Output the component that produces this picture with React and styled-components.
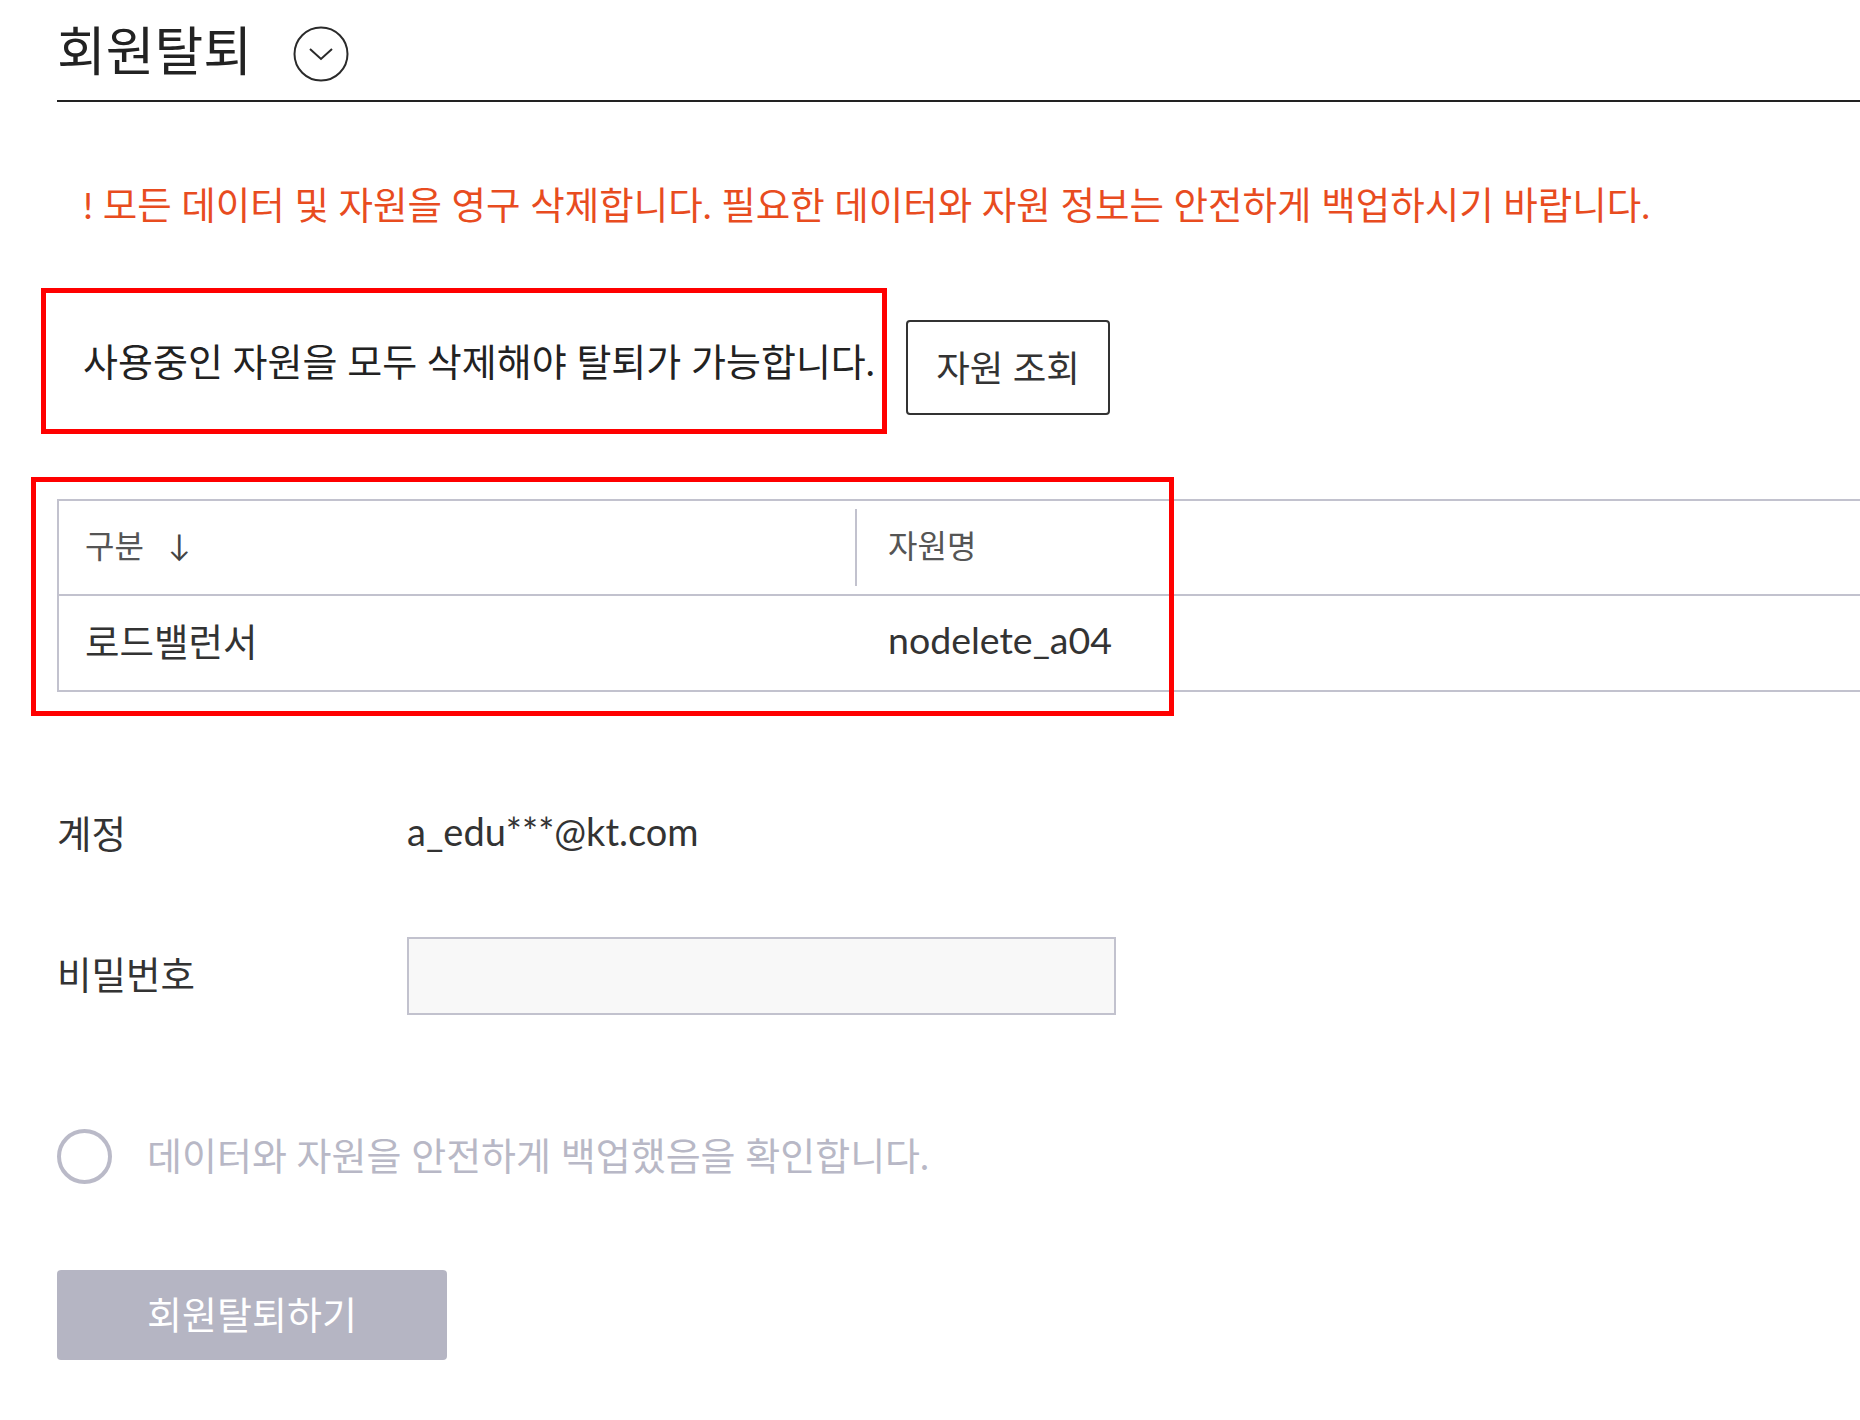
import React from 'react';
import styled, { createGlobalStyle } from 'styled-components';

const GlobalStyle = createGlobalStyle`
  body {
    margin: 0;
    background: #ffffff;
    font-family: 'Lato', 'Noto Sans CJK KR', sans-serif;
    color: #333333;
  }
`;

const Page = styled.div`
  width: 1860px;
  min-height: 1420px;
  padding-left: 57px;
  box-sizing: border-box;
  overflow: hidden;
`;

const Header = styled.div`
  display: flex;
  align-items: center;
  height: 100px;
  border-bottom: 2px solid #222222;
`;

const Title = styled.h1`
  margin: 0;
  font-size: 53px;
  font-weight: 400;
  color: #222222;
  line-height: 1;
`;

const ToggleIcon = styled.button`
  display: flex;
  margin: 8px 0 0 41px;
  padding: 0;
  border: none;
  background: none;
  cursor: pointer;
`;

const Warning = styled.p`
  margin: 78px 0 0 26px;
  font-size: 37.5px;
  line-height: 50px;
  color: #e84c1f;
`;

const NoticeRow = styled.div`
  display: flex;
  align-items: flex-start;
  margin-top: 58px;
`;

const NoticeBox = styled.div`
  display: flex;
  align-items: center;
  width: 846px;
  height: 146px;
  margin-left: -16px;
  padding: 0 0 4px 37px;
  box-sizing: border-box;
  border: 5px solid #ff0000;
  font-size: 38px;
  color: #222222;
`;

const OutlineButton = styled.button`
  width: 204px;
  height: 95px;
  margin: 32px 0 0 19px;
  padding-bottom: 4px;
  border: 2px solid #333333;
  border-radius: 4px;
  background: #ffffff;
  font-family: inherit;
  font-size: 36.5px;
  color: #333333;
`;

const TableSection = styled.div`
  position: relative;
  margin-top: 65px;
`;

const Highlight = styled.div`
  position: absolute;
  left: -26px;
  top: -22px;
  width: 1143px;
  height: 239px;
  box-sizing: border-box;
  border: 5px solid #ff0000;
  pointer-events: none;
`;

const Table = styled.div`
  width: calc(100% + 40px);
  border: 2px solid #c2c2ce;
  box-sizing: border-box;
`;

const Row = styled.div`
  display: grid;
  grid-template-columns: 798px 1fr;
  height: ${p => (p.head ? '93px' : '94px')};
  border-bottom: ${p => (p.head ? '2px solid #c2c2ce' : 'none')};
`;

const Cell = styled.div`
  position: relative;
  display: flex;
  align-items: center;
  padding-left: ${p => (p.first ? '26px' : '31px')};
  padding-bottom: 8px;
  font-size: ${p => (p.head ? '32px' : '37.5px')};
  color: ${p => (p.head ? '#555555' : '#333333')};

  ${p =>
    p.head && p.first
      ? `&::after {
    content: '';
    position: absolute;
    right: 0;
    top: 8px;
    bottom: 8px;
    width: 2px;
    background: #c2c2ce;
  }`
      : ''}
`;

const SortArrow = styled.span`
  margin-left: 24px;
  font-size: 30px;
  color: #444444;
`;

const FieldRow = styled.div`
  display: flex;
  align-items: center;
  margin-top: ${p => p.gap}px;
  height: ${p => p.h}px;
`;

const FieldLabel = styled.div`
  width: 350px;
  padding-bottom: ${p => p.lift || 0}px;
  font-size: 37.5px;
  color: #333333;
`;

const FieldValue = styled.div`
  font-size: 38px;
  color: #333333;
`;

const PasswordInput = styled.input`
  width: 709px;
  height: 78px;
  box-sizing: border-box;
  border: 2px solid #c2c2ce;
  background: #f8f8f8;
  font-size: 30px;
  padding: 0 16px;
  outline: none;
`;

const CheckRow = styled.label`
  display: flex;
  align-items: center;
  height: 55px;
  margin-top: 114px;
  cursor: pointer;
`;

const Radio = styled.span`
  width: 55px;
  height: 55px;
  box-sizing: border-box;
  border: 4px solid #babac8;
  border-radius: 50%;
`;

const CheckText = styled.span`
  margin-left: 35px;
  padding-bottom: 6px;
  font-size: 38px;
  color: #b8b8c6;
`;

const SubmitButton = styled.button`
  display: block;
  width: 390px;
  height: 90px;
  margin-top: 86px;
  padding-bottom: 6px;
  border: none;
  border-radius: 4px;
  background: #b5b5c3;
  color: #ffffff;
  font-family: inherit;
  font-size: 38px;
`;

const ChevronCircle = () => (
  <svg width="56" height="56" viewBox="0 0 56 56" fill="none">
    <circle cx="28" cy="28" r="26.5" stroke="#2a2a2a" strokeWidth="2" />
    <path d="M17 23 L28 33 L39 23" stroke="#2a2a2a" strokeWidth="2" />
  </svg>
);

export default function App() {
  return (
    <Page>
      <GlobalStyle />
      <Header>
        <Title>회원탈퇴</Title>
        <ToggleIcon aria-label="펼치기">
          <ChevronCircle />
        </ToggleIcon>
      </Header>

      <Warning>
        ! 모든 데이터 및 자원을 영구 삭제합니다. 필요한 데이터와 자원 정보는 안전하게 백업하시기 바랍니다.
      </Warning>

      <NoticeRow>
        <NoticeBox>사용중인 자원을 모두 삭제해야 탈퇴가 가능합니다.</NoticeBox>
        <OutlineButton>자원 조회</OutlineButton>
      </NoticeRow>

      <TableSection>
        <Table>
          <Row head>
            <Cell head first>
              구분<SortArrow>↓</SortArrow>
            </Cell>
            <Cell head>자원명</Cell>
          </Row>
          <Row>
            <Cell first>로드밸런서</Cell>
            <Cell>nodelete_a04</Cell>
          </Row>
        </Table>
        <Highlight />
      </TableSection>

      <FieldRow gap={109} h={60}>
        <FieldLabel>계정</FieldLabel>
        <FieldValue>a_edu***@kt.com</FieldValue>
      </FieldRow>

      <FieldRow gap={76} h={78}>
        <FieldLabel lift={8}>비밀번호</FieldLabel>
        <PasswordInput type="password" />
      </FieldRow>

      <CheckRow>
        <Radio />
        <CheckText>데이터와 자원을 안전하게 백업했음을 확인합니다.</CheckText>
      </CheckRow>

      <SubmitButton disabled>회원탈퇴하기</SubmitButton>
    </Page>
  );
}
